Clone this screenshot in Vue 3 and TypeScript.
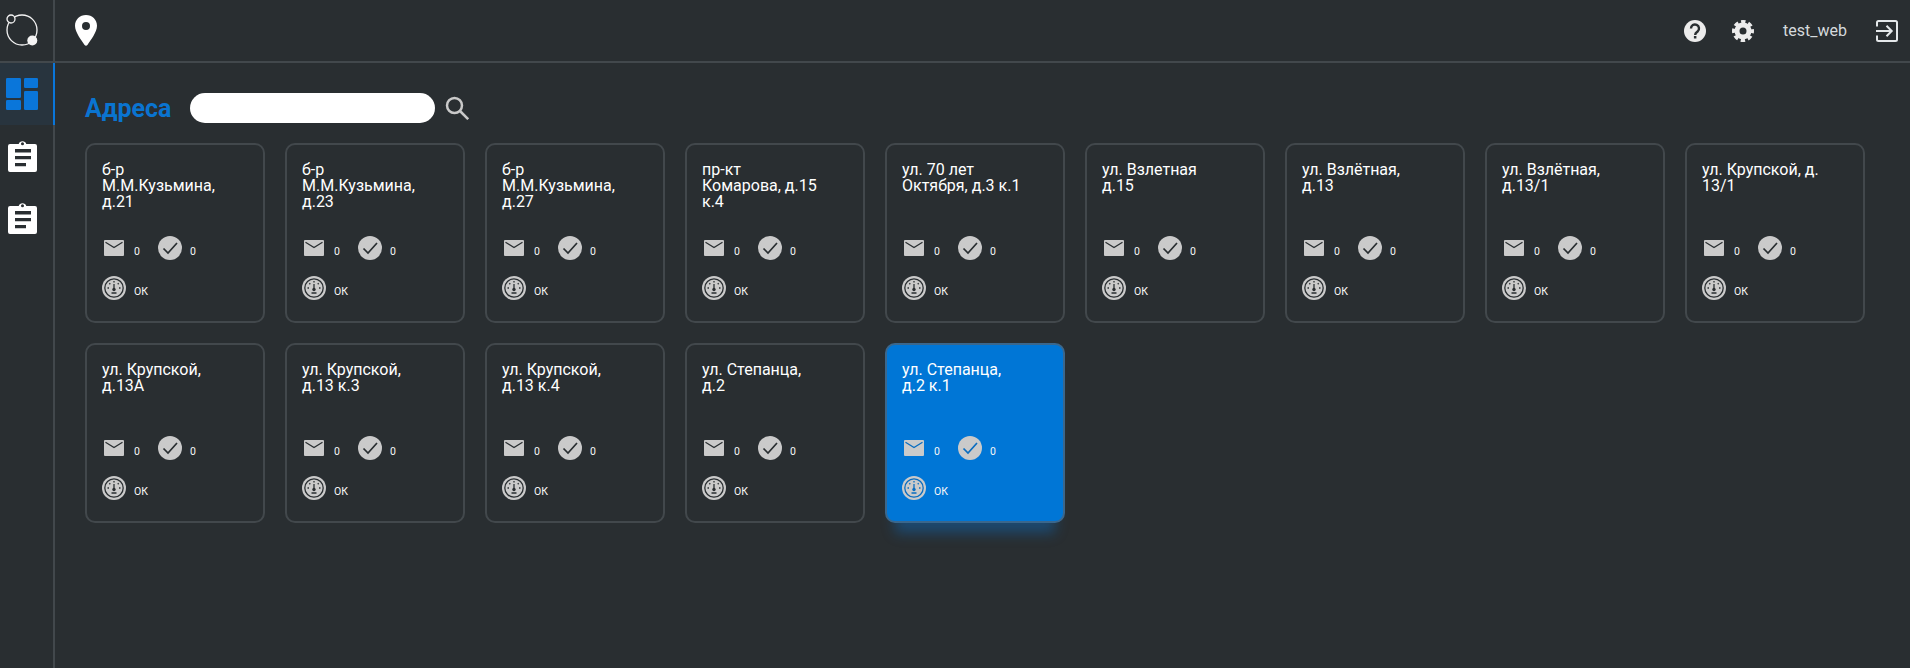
<script setup lang="ts">
interface Place { name: string; active?: boolean }
const places: Place[] = [
  { name: 'б-р\nМ.М.Кузьмина,\nд.21' },
  { name: 'б-р\nМ.М.Кузьмина,\nд.23' },
  { name: 'б-р\nМ.М.Кузьмина,\nд.27' },
  { name: 'пр-кт\nКомарова, д.15\nк.4' },
  { name: 'ул. 70 лет\nОктября, д.3 к.1' },
  { name: 'ул. Взлетная\nд.15' },
  { name: 'ул. Взлётная,\nд.13' },
  { name: 'ул. Взлётная,\nд.13/1' },
  { name: 'ул. Крупской, д.\n13/1' },
  { name: 'ул. Крупской,\nд.13А' },
  { name: 'ул. Крупской,\nд.13 к.3' },
  { name: 'ул. Крупской,\nд.13 к.4' },
  { name: 'ул. Степанца,\nд.2' },
  { name: 'ул. Степанца,\nд.2 к.1', active: true },
]
</script>

<template>
  <div class="app">
    <aside class="side">
      <div class="logo">
        <svg width="32" height="32" viewBox="0 0 32 32" fill="none">
          <circle cx="16" cy="16" r="15" stroke="#f4f4f4" stroke-width="1.300" />
          <circle cx="5" cy="5" r="4" fill="#292e31" stroke="#f4f4f4" stroke-width="1.300" />
          <circle cx="26.300" cy="26.500" r="5" fill="#f4f4f4" />
        </svg>
      </div>
      <nav class="nav">
        <div class="nav-item on">
          <svg width="32" height="32" viewBox="0 0 32 32" fill="#0a76da">
            <rect x="0" y="0" width="15" height="20" rx="1.200" />
            <rect x="18" y="0" width="14" height="10" rx="1.200" />
            <rect x="0" y="22" width="15" height="10" rx="1.200" />
            <rect x="18" y="13" width="14" height="19" rx="1.200" />
          </svg>
        </div>
        <div class="nav-item" v-for="n in 2" :key="n">
          <svg width="29" height="32" viewBox="0 0 29 32">
            <path fill="#fff" fill-rule="evenodd" d="M2 4h8.700a4 4 0 0 1 7.600 0H27a2 2 0 0 1 2 2v24a2 2 0 0 1-2 2H2a2 2 0 0 1-2-2V6a2 2 0 0 1 2-2Zm12.500-1.700a1.500 1.500 0 1 0 0 3 1.500 1.500 0 0 0 0-3ZM7 9v3.500h16V9Zm0 7v3.300h16V16Zm0 7v3.200h11V23Z" />
          </svg>
        </div>
      </nav>
    </aside>
    <main class="main">
      <header class="top">
        <svg class="pin" width="22" height="31" viewBox="0 0 22 31">
          <path fill="#fff" fill-rule="evenodd" d="M11 0C4.800 0 0 4.700 0 10.800c0 6.400 6.300 14.200 9.600 19.300.7.900 2.100.9 2.800 0C15.700 25 22 17.200 22 10.800 22 4.700 17.200 0 11 0Zm0 7a4 4 0 1 1 0 8 4 4 0 0 1 0-8Z" />
        </svg>
        <div class="spacer"></div>
        <svg class="t-help" width="22" height="22" viewBox="0 0 22 22">
          <circle cx="11" cy="11" r="11" fill="#ececec" />
          <path fill="none" stroke="#292e31" stroke-width="2.400" d="M7 8.500a4 4 0 1 1 6.600 3c-1.300 1.100-2.400 1.600-2.400 3.500" />
          <rect x="9.900" y="16" width="2.500" height="2.500" fill="#292e31" />
        </svg>
        <svg class="t-gear" width="22" height="22" viewBox="0 0 22 22" fill="none" stroke="#ececec">
          <circle cx="11" cy="11" r="6" stroke-width="5" />
          <circle cx="11" cy="11" r="9.200" stroke-width="3.600" stroke-dasharray="4.300 2.926" stroke-dashoffset="2.150" />
        </svg>
        <span class="user">test_web</span>
        <svg class="t-exit" width="22" height="22" viewBox="0 0 22 22" fill="none" stroke="#e4e8ea" stroke-width="2">
          <path d="M1 6.500V2.500A1.500 1.500 0 0 1 2.500 1h17A1.500 1.500 0 0 1 21 2.500v17a1.500 1.500 0 0 1-1.500 1.500h-17A1.500 1.500 0 0 1 1 19.500v-4" />
          <path d="M0 11h15.500M10.500 5.800 15.700 11l-5.200 5.200" />
        </svg>
      </header>
      <section class="content">
        <div class="head">
          <h1 class="title">Адреса</h1>
          <div class="search"></div>
          <svg class="s-icon" width="24" height="24" viewBox="0 0 24 24" fill="none" stroke="#c9c9c9" stroke-width="2.500">
            <circle cx="9.500" cy="9.500" r="7.500" />
            <path d="m15 15 8.200 8.200" />
          </svg>
        </div>
        <div class="grid">
          <article v-for="p in places" :key="p.name" class="card" :class="{ active: p.active }">
            <div class="name">{{ p.name }}</div>
            <div class="stats">
              <svg class="mail" width="20" height="16" viewBox="0 0 20 16">
                <rect width="20" height="16" rx="1" fill="#cacaca" />
                <path d="m1.500 2.200 8.500 5.300 8.500-5.300" fill="none" class="ink" stroke-width="1.300" />
              </svg>
              <span class="num n1">0</span>
              <svg class="chk" width="24" height="24" viewBox="0 0 24 24">
                <circle cx="12" cy="12" r="12" fill="#cacaca" />
                <path d="m5.500 12.500 4.500 4.500 9-10" fill="none" class="ink" stroke-width="1.700" />
              </svg>
              <span class="num">0</span>
            </div>
            <div class="status">
              <svg width="24" height="24" viewBox="0 0 24 24">
                <circle cx="12" cy="12" r="12" fill="#cacaca" />
                <circle cx="12" cy="12" r="9.200" fill="none" class="ink" stroke-width="1.300" />
                <path d="M12 5v1.500M5.500 12H7M17 12h1.500M7.300 7.300l1 1M16.700 7.300l-1 1M12 8v5M9.500 17h5" fill="none" class="ink" stroke-width="1.300" />
                <circle cx="12" cy="13.500" r="1.700" class="dot" />
              </svg>
              <span class="num ok">ОК</span>
            </div>
          </article>
        </div>
      </section>
    </main>
  </div>
</template>

<style>
html, body { margin: 0; background: #292e31; }
</style>

<style scoped>
.app {
  display: flex;
  width: 1910px;
  height: 668px;
  overflow: hidden;
  background: #292e31;
  font-family: Roboto, "Liberation Sans", sans-serif;
  color: #fff;
}
.side {
  width: 55px;
  flex: none;
  box-sizing: border-box;
  border-right: 2px solid #42484c;
}
.logo {
  height: 63px;
  box-sizing: border-box;
  border-bottom: 2px solid #42484c;
  margin-right: -2px;
  display: flex;
  align-items: center;
  padding: 0 0 1px 6px;
}
.nav-item {
  height: 62px;
  display: flex;
  align-items: center;
  padding-left: 6px;
}
.nav-item:not(.on) { padding-left: 8px; }
.nav-item.on {
  background: #28343e;
  box-shadow: 2px 0 0 #0a76da;
}
.main { flex: 1; min-width: 0; }
.top {
  height: 63px;
  box-sizing: border-box;
  border-bottom: 2px solid #42484c;
  display: flex;
  align-items: center;
  padding: 0 12px 0 20px;
}
.spacer { flex: 1; }
.t-help { margin-right: 26px; }
.t-gear { margin-right: 29px; }
.user { font-size: 16px; color: #d5dadd; margin-right: 29px; }
.content { padding: 30px 0 0 30px; }
.head { display: flex; align-items: center; height: 30px; }
.title {
  margin: 0;
  width: 105px;
  font-size: 25px;
  font-weight: 700;
  color: #0a74d0;
}
.search {
  width: 245px;
  height: 30px;
  border-radius: 15px;
  background: #fff;
}
.s-icon { margin-left: 10px; }
.grid {
  margin-top: 20px;
  display: grid;
  grid-template-columns: repeat(9, 180px);
  grid-auto-rows: 180px;
  gap: 20px;
}
.card {
  box-sizing: border-box;
  border: 2px solid #42484c;
  border-radius: 10px;
  padding: 17px 15px 0;
  display: flex;
  flex-direction: column;
}
.card.active {
  background: #0076d6;
  border-color: #3b678c;
  box-shadow: 0 20px 12px -10px rgba(10, 116, 208, 0.4);
}
.name {
  height: 74px;
  font-size: 16px;
  line-height: 16px;
  white-space: pre-line;
}
.stats, .status { display: flex; align-items: center; height: 24px; }
.stats { padding-left: 2px; }
.status { margin-top: 16px; }
.num { font-size: 10.500px; font-weight: 400; color: #f8f8f8; position: relative; top: 3px; }
.stats .n1 { margin-left: 10px; margin-right: 18px; }
.chk { margin-right: 8px; }
.status .num { margin-left: 8px; }
.ink { stroke: #292e31; }
.dot { fill: #292e31; }
.active .ink { stroke: #0a6dc0; }
.active .dot { fill: #0a6dc0; }
</style>
